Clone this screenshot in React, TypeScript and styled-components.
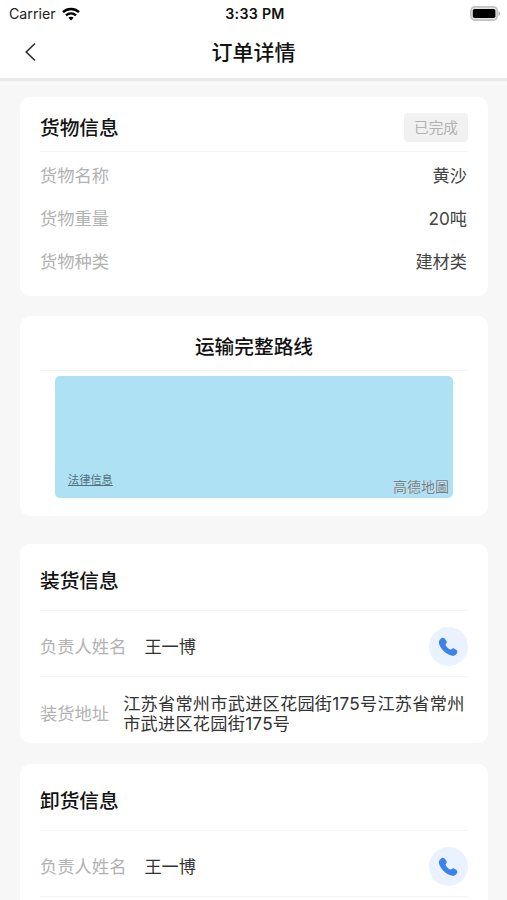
import React from "react";
import styled, { createGlobalStyle } from "styled-components";

const GlobalStyle = createGlobalStyle`
  * { box-sizing: border-box; }
  body {
    margin: 0;
    background: #f7f7f7;
    font-family: Inter, "Noto Sans CJK SC", sans-serif;
    overflow: hidden;
  }
`;

const Screen = styled.div`
  width: 507px;
  height: 900px;
  overflow: hidden;
  background: #f7f7f7;
`;

const StatusBar = styled.div`
  display: grid;
  grid-template-columns: 1fr auto 1fr;
  align-items: center;
  height: 28px;
  padding: 0 6px 0 9px;
  background: #fff;
  color: #222;
  font-size: 14.2px;
  line-height: 28px;
`;

const Carrier = styled.div`
  display: flex;
  align-items: center;
  gap: 6px;
`;

const Clock = styled.div`
  font-weight: 600;
  letter-spacing: 0.3px;
  color: #111;
`;

const BatteryIcon = styled.svg`
  justify-self: end;
  margin-top: -2px;
`;

const NavBar = styled.header`
  display: grid;
  grid-template-columns: 60px 1fr 60px;
  align-items: center;
  height: 53px;
  padding-bottom: 2px;
  border-bottom: 3px solid #e9e9e9;
  background: #fff;
`;

const BackButton = styled.button`
  display: flex;
  padding: 0 0 0 24px;
  border: 0;
  background: none;
`;

const NavTitle = styled.h1`
  margin: 0;
  padding-top: 2px;
  text-align: center;
  font-size: 21px;
  font-weight: 500;
  line-height: 30px;
  color: #111;
`;

const Content = styled.main`
  padding: 16px 19px 0 20px;
`;

const Card = styled.section<{ $height: number; $gap: number }>`
  height: ${(p) => p.$height}px;
  margin-bottom: ${(p) => p.$gap}px;
  padding: 0 20px;
  border-radius: 10px;
  background: #fff;
`;

const CardHeader = styled.div<{ $height: number; $center?: boolean }>`
  display: flex;
  align-items: center;
  justify-content: ${(p) => (p.$center ? "center" : "space-between")};
  height: ${(p) => p.$height}px;
  padding-top: ${(p) => (p.$center ? 5 : 6)}px;
  border-bottom: 1px solid #f5f5f5;
`;

const CardTitle = styled.h2`
  margin: 0;
  padding-top: 2px;
  font-size: 19.7px;
  font-weight: 500;
  line-height: 28px;
  color: #111;
`;

const Status = styled.span`
  display: flex;
  align-items: center;
  justify-content: center;
  width: 64px;
  height: 29px;
  padding-bottom: 1px;
  border-radius: 4px;
  background: #f1f1f1;
  color: #b2b2b2;
  font-size: 14.7px;
`;

const Fields = styled.div`
  padding-top: 2px;
`;

const Field = styled.div`
  display: flex;
  align-items: center;
  justify-content: space-between;
  height: 43px;
  padding-right: 1px;
`;

const Label = styled.span`
  flex: none;
  font-size: 17.3px;
  line-height: 20px;
  color: #b2b2b2;
`;

const Value = styled.span`
  font-size: 17.2px;
  line-height: 20px;
  color: #444;
`;

const MapView = styled.div`
  display: flex;
  justify-content: space-between;
  align-items: flex-end;
  height: 122px;
  margin: 5px 15px 0;
  padding: 0 4px 2px 13px;
  border-radius: 5px;
  background: #aee1f4;
`;

const LegalLink = styled.a`
  margin-bottom: 8px;
  font-size: 11.2px;
  line-height: 16px;
  color: #52707b;
  text-decoration: underline;
  text-underline-offset: 1px;
`;

const MapBrand = styled.span`
  font-size: 14px;
  font-weight: 400;
  line-height: 18px;
  color: #6d7f88;
  text-shadow: 0 0 1px #dfe9ed, 0 0 1px #dfe9ed;
`;

const ContactRow = styled.div`
  display: flex;
  align-items: center;
  height: 66px;
  padding-top: 6px;
  border-bottom: 1px solid #f3f3f3;
`;

const ContactName = styled(Value)`
  flex: 1;
  margin-left: 18px;
  color: #333;
`;

const CallButton = styled.button`
  display: flex;
  align-items: center;
  justify-content: center;
  width: 39px;
  height: 39px;
  padding: 0 1px 0 0;
  border: 0;
  border-radius: 50%;
  background: #ebf2ff;
`;

const AddressRow = styled.div`
  display: flex;
  align-items: center;
  height: 65px;
  padding-top: 8px;
`;

const Address = styled(Value)`
  flex: 1;
  margin: 0 0 0 14px;
  color: #333;
  letter-spacing: 0.24px;
`;

const PhoneIcon = () => (
  <svg width="20" height="20" viewBox="0 0 20 20" fill="#3b82ed">
    <path d="M3.400 1.200C4.500.5 6 .7 6.800 1.700l1.500 2c.7 1 .7 2-.1 2.800-.8.8-.8 1.300-.2 2.200 1 1.600 2.100 2.700 3.600 3.500.9.5 1.400.4 2.100-.3.800-.7 1.800-.8 2.700-.2l2 1.400c1.200.8 1.300 2.200.4 3.400-1.300 1.800-3.400 2.800-5.400 2.100C7.300 16.500 3 12.300 1.100 6.900.4 4.700 1.300 2.500 3.400 1.200z" />
  </svg>
);

interface ContactCardProps {
  title: string;
  name: string;
  addressLabel?: string;
  address?: string;
}

const ContactCard = ({ title, name, addressLabel, address }: ContactCardProps) => (
  <Card $height={199} $gap={21}>
    <CardHeader $height={67}>
      <CardTitle>{title}</CardTitle>
    </CardHeader>
    <ContactRow>
      <Label>负责人姓名</Label>
      <ContactName>{name}</ContactName>
      <CallButton aria-label="拨打电话">
        <PhoneIcon />
      </CallButton>
    </ContactRow>
    {address && (
      <AddressRow>
        <Label>{addressLabel}</Label>
        <Address>{address}</Address>
      </AddressRow>
    )}
  </Card>
);

const goods = [
  { label: "货物名称", value: "黄沙" },
  { label: "货物重量", value: "20吨" },
  { label: "货物种类", value: "建材类" },
];

const address = "江苏省常州市武进区花园街175号江苏省常州市武进区花园街175号";

export default function App() {
  return (
    <Screen>
      <GlobalStyle />
      <StatusBar>
        <Carrier>
          Carrier
          <svg width="18" height="14" viewBox="0 0 18 14" fill="none" stroke="#000" strokeWidth="2.500">
            <path d="M1 5.100C5.500.9 12.500.9 17 5.100" />
            <path d="M4 8.400c2.900-2.600 7.100-2.600 10 0" />
            <path d="M6.400 10.700c1.500-1.400 3.700-1.400 5.200 0L9 13.400z" fill="#000" stroke="none" />
          </svg>
        </Carrier>
        <Clock>3:33 PM</Clock>
        <BatteryIcon width="31" height="15" viewBox="0 0 31 15">
          <rect x="0.900" y="0.900" width="26.400" height="13.200" rx="4" fill="#e4e4e4" stroke="#c2c2c2" strokeWidth="1.600" />
          <rect x="2.800" y="3" width="22.600" height="9" rx="1.800" fill="#000" />
          <path d="M28.600 5.200v4.600c1.900-.7 1.900-3.900 0-4.600z" fill="#aaa" />
        </BatteryIcon>
      </StatusBar>
      <NavBar>
        <BackButton aria-label="返回">
          <svg width="13" height="20" viewBox="0 0 13 20" fill="none" stroke="#333" strokeWidth="1.700">
            <path d="M11 1.500 2.300 10 11 18.500" />
          </svg>
        </BackButton>
        <NavTitle>订单详情</NavTitle>
      </NavBar>
      <Content>
        <Card $height={199} $gap={20}>
          <CardHeader $height={55}>
            <CardTitle>货物信息</CardTitle>
            <Status>已完成</Status>
          </CardHeader>
          <Fields>
            {goods.map((item) => (
              <Field key={item.label}>
                <Label>{item.label}</Label>
                <Value>{item.value}</Value>
              </Field>
            ))}
          </Fields>
        </Card>
        <Card $height={200} $gap={28}>
          <CardHeader $height={55} $center>
            <CardTitle>运输完整路线</CardTitle>
          </CardHeader>
          <MapView>
            <LegalLink>法律信息</LegalLink>
            <MapBrand>高德地圖</MapBrand>
          </MapView>
        </Card>
        <ContactCard title="装货信息" name="王一博" addressLabel="装货地址" address={address} />
        <ContactCard title="卸货信息" name="王一博" />
      </Content>
    </Screen>
  );
}
